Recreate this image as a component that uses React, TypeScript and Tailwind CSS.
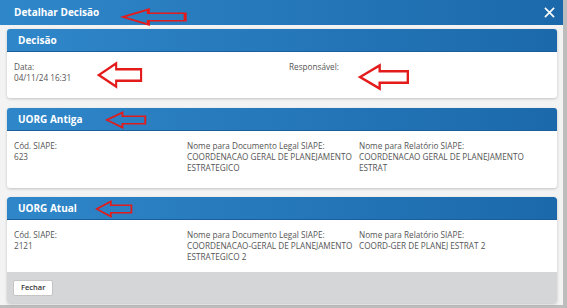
const font = { fontFamily: '"Open Sans", "Noto Sans", sans-serif' };

function Arrow({ className }: { className: string }) {
  return (
    <svg viewBox="0 0 48 24" className={className} fill="none" preserveAspectRatio="none">
      <path
        d="M2 12 L20 2 L20 7 L46 7 L46 17 L20 17 L20 22 Z"
        stroke="#e31b1b"
        strokeWidth="2.2"
        strokeLinejoin="miter"
      />
    </svg>
  );
}

function CardHeader({ title, arrow }: { title: string; arrow?: string }) {
  return (
    <div className="relative h-[23px] flex items-center px-[11px] rounded-t-[3px] bg-gradient-to-r from-[#2f87c9] to-[#1b69ab] border-b border-[#1a5f9c]">
      <span className="text-white text-[10px] font-bold">{title}</span>
      {arrow && <Arrow className={arrow} />}
    </div>
  );
}

function Field({ label, value }: { label: string; value: string }) {
  return (
    <div className="text-[8.2px] leading-[11px] text-[#555] whitespace-pre">
      <div>{label}</div>
      <div>{value}</div>
    </div>
  );
}

export default function App() {
  return (
    <div style={font} className="w-[567px] h-[308px] bg-[#bdbdbd] overflow-hidden">
      <div className="w-[563px] h-[305px] bg-[#f3f3f3] flex flex-col">
        <div className="relative h-[25px] shrink-0 flex items-center justify-between pl-[14px] pr-[8px] bg-gradient-to-r from-[#2f87c9] to-[#1b69ab]">
          <span className="text-white text-[10px] font-bold">Detalhar Decisão</span>
          <Arrow className="absolute left-[120px] top-[8px] w-[68px] h-[18px]" />
          <svg viewBox="0 0 12 12" className="w-[11px] h-[11px]" stroke="white" strokeWidth="1.8">
            <path d="M1 1 L11 11 M11 1 L1 11" />
          </svg>
        </div>

        <div className="flex flex-col pl-[7px] pr-[6px] pt-[4px]">
          <div className="bg-white rounded-[3px] shadow-[0_1px_3px_rgba(0,0,0,0.2)]">
            <CardHeader title="Decisão" />
            <div className="relative h-[46px] grid grid-cols-[275px_1fr] px-[7px] pt-[9px]">
              <Field label="Data:" value="04/11/24 16:31" />
              <Field label="Responsável:" value="" />
              <Arrow className="absolute left-[90px] top-[9px] w-[46px] h-[28px]" />
              <Arrow className="absolute left-[351px] top-[11px] w-[52px] h-[28px]" />
            </div>
          </div>

          <div className="mt-[10px] bg-white rounded-[3px] shadow-[0_1px_3px_rgba(0,0,0,0.2)]">
            <CardHeader title="UORG Antiga" arrow="absolute left-[98px] top-[3px] w-[42px] h-[18px]" />
            <div className="h-[57px] grid grid-cols-[173px_172px_1fr] px-[7px] pt-[9px]">
              <Field label="Cód. SIAPE:" value="623" />
              <Field label="Nome para Documento Legal SIAPE:" value={"COORDENACAO GERAL DE PLANEJAMENTO\nESTRATEGICO"} />
              <Field label="Nome para Relatório SIAPE:" value={"COORDENACAO GERAL DE PLANEJAMENTO\nESTRAT"} />
            </div>
          </div>

          <div className="mt-[9px] rounded-[3px] shadow-[0_1px_3px_rgba(0,0,0,0.2)] overflow-hidden">
            <div className="bg-white">
              <CardHeader title="UORG Atual" arrow="absolute left-[88px] top-[3px] w-[38px] h-[18px]" />
              <div className="h-[52px] grid grid-cols-[173px_172px_1fr] px-[7px] pt-[9px]">
                <Field label="Cód. SIAPE:" value="2121" />
                <Field label="Nome para Documento Legal SIAPE:" value={"COORDENACAO-GERAL DE PLANEJAMENTO\nESTRATEGICO 2"} />
                <Field label="Nome para Relatório SIAPE:" value="COORD-GER DE PLANEJ ESTRAT 2" />
              </div>
            </div>
            <div className="h-[31px] bg-[#d5d6d8] flex items-center px-[6px]">
              <button className="h-[16px] px-[7px] bg-white border border-[#c4c4c4] rounded-[2px] text-[7.5px] font-semibold text-[#333]">
                Fechar
              </button>
            </div>
          </div>
        </div>
      </div>
    </div>
  );
}
